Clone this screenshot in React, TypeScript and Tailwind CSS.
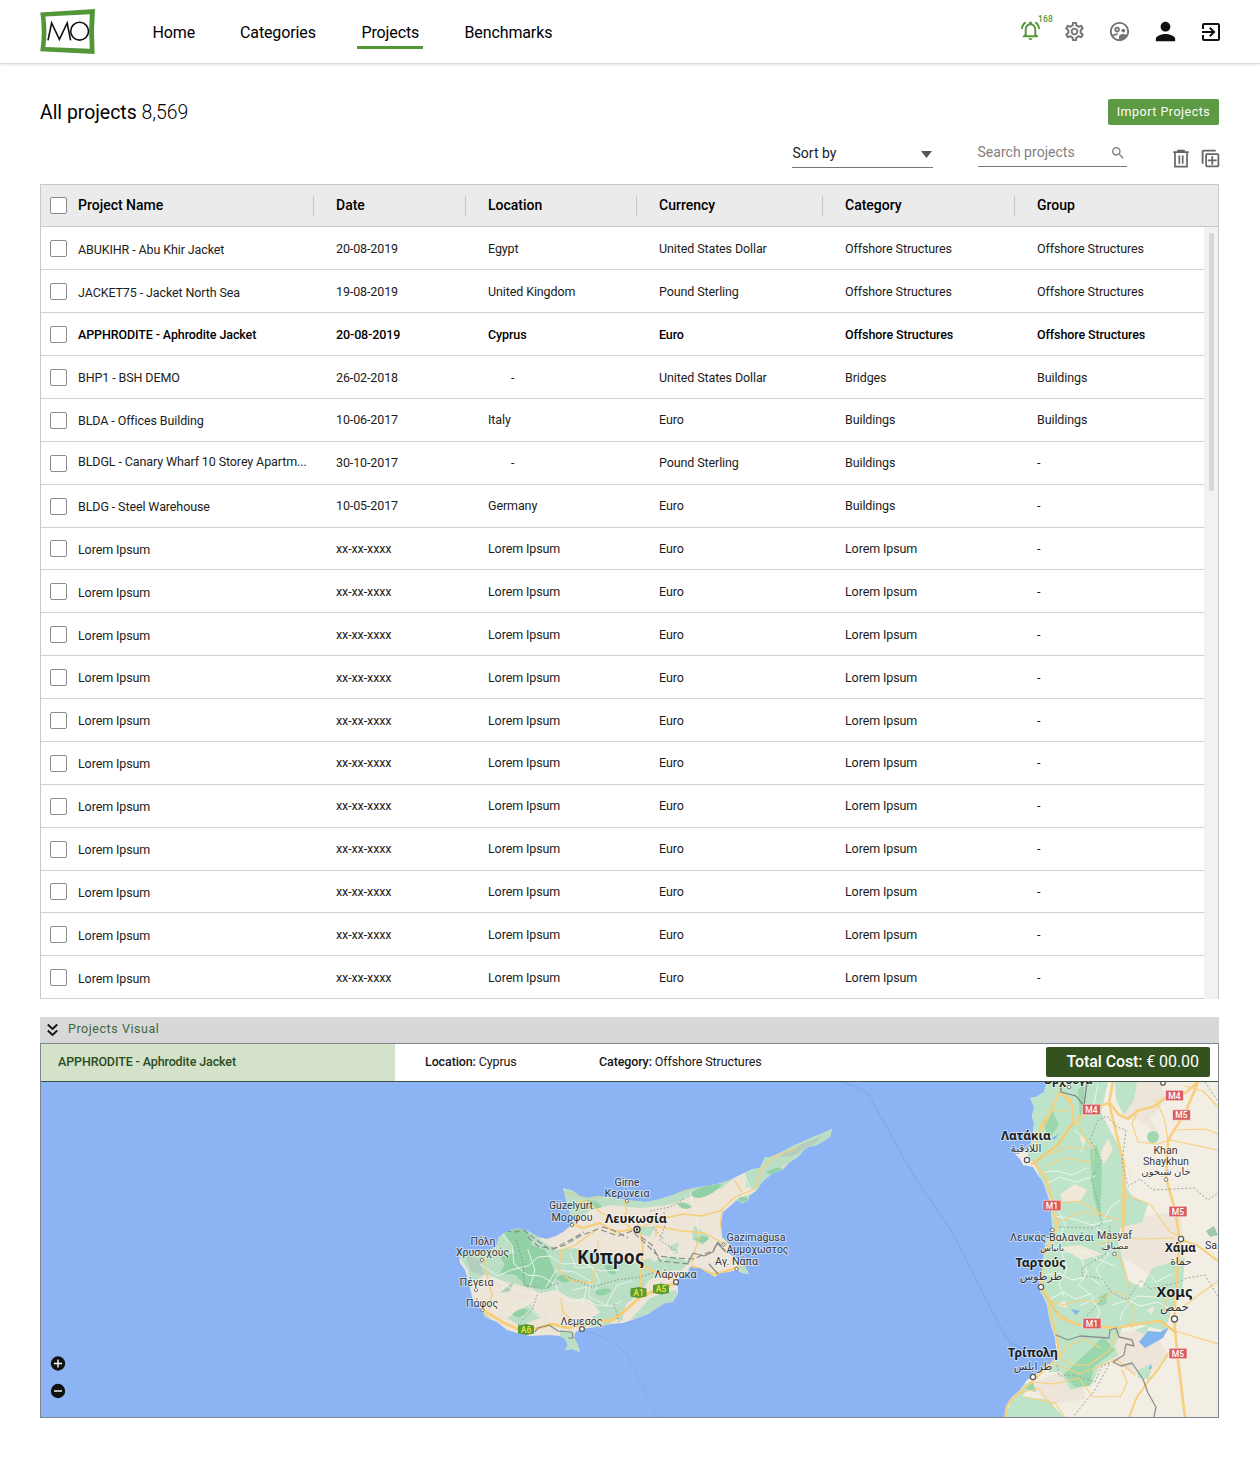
import React from "react";
import {
  MdOutlineSettings,
  MdOutlineSupervisedUserCircle,
  MdPerson,
  MdExitToApp,
  MdSearch,
  MdOutlineAddToPhotos,
  MdOutlineNotificationsActive,
} from "react-icons/md";

type Row = [string, string, string, string, string, string];

const named: Row[] = [
  ["ABUKIHR - Abu Khir Jacket", "20-08-2019", "Egypt", "United States Dollar", "Offshore Structures", "Offshore Structures"],
  ["JACKET75 - Jacket North Sea", "19-08-2019", "United Kingdom", "Pound Sterling", "Offshore Structures", "Offshore Structures"],
  ["APPHRODITE - Aphrodite Jacket", "20-08-2019", "Cyprus", "Euro", "Offshore Structures", "Offshore Structures"],
  ["BHP1 - BSH DEMO", "26-02-2018", "-", "United States Dollar", "Bridges", "Buildings"],
  ["BLDA - Offices Building", "10-06-2017", "Italy", "Euro", "Buildings", "Buildings"],
  ["BLDGL - Canary Wharf 10 Storey Apartm...", "30-10-2017", "-", "Pound Sterling", "Buildings", "-"],
  ["BLDG - Steel Warehouse", "10-05-2017", "Germany", "Euro", "Buildings", "-"],
];
const rows: Row[] = [
  ...named,
  ...Array.from({ length: 11 }, (): Row => ["Lorem Ipsum", "xx-xx-xxxx", "Lorem Ipsum", "Euro", "Lorem Ipsum", "-"]),
];

const columns = ["Date", "Location", "Currency", "Category", "Group"];
const grid = "grid grid-cols-[37px_258px_152px_171px_186px_192px_1fr] items-center";

function Logo() {
  return (
    <svg className="h-[46px] w-[56px]" viewBox="0 0 56 46">
      <path d="M0.3 3.6 L55 0 Q53.2 22 54.6 45 L0.3 42.2 Q3.2 23 0.3 3.6Z" fill="#529637" />
      <path d="M5.4 7.6 L49.8 5.2 Q48.4 22 49.8 39.7 L5.4 38 Q7.4 23 5.4 7.6Z" fill="#fff" />
      <path d="M8 31.3 L11.6 14 L19.4 30.4 L27.2 14 L30.6 31.3" fill="none" stroke="#111" strokeWidth="1.6" strokeLinejoin="miter" />
      <circle cx="39.6" cy="22.2" r="8.9" fill="none" stroke="#111" strokeWidth="1.6" />
    </svg>
  );
}

function Checkbox() {
  return <span className="mt-px ml-[9.4px] block size-[17px] rounded-[2px] border border-[#8b8b8b] bg-white" />;
}

function TopBar() {
  const item = "text-[16px] leading-6 tracking-[-0.12px]";
  return (
    <header className="flex h-16 items-center border-b border-[#dcdcdc] pr-[37px] pl-10 shadow-[0_1px_2px_#e6e6e6]">
      <Logo />
      <nav className="flex flex-1 items-center pt-[2px] text-black">
        <a className={item + " ml-[56.5px] w-[87.5px]"}>Home</a>
        <a className={item + " w-[117px]"}>Categories</a>
        <a className={item + " relative mr-[41.5px] w-[66px] pl-[4.5px]"}>
          Projects
          <span className="absolute -bottom-[4px] left-0 h-[2.5px] w-full bg-[#529637]" />
        </a>
        <a className={item}>Benchmarks</a>
      </nav>
      <div className="flex items-center text-[#737373]">
        <span className="relative mr-[21px] text-[#529637]">
          <MdOutlineNotificationsActive size={23} className="-mt-[2px]" />
          <span className="absolute -top-[8px] left-[19px] text-[8.5px] leading-3 font-medium tracking-[0.2px]">168</span>
        </span>
        <MdOutlineSettings size={23} className="mr-[22px]" />
        <MdOutlineSupervisedUserCircle size={23} className="mr-[20px]" />
        <MdPerson size={29} className="mr-[19px] text-[#111]" />
        <MdExitToApp size={24} className="text-[#111]" />
      </div>
    </header>
  );
}

function TrashIcon() {
  return (
    <svg className="h-[20px] w-[16px]" viewBox="0 0 16 20" fill="none" stroke="#666" strokeWidth="1.7">
      <path d="M0.3 3.2H15.7 M5 2.6V1.5H11V2.6 M2 3.4V17.6H14V3.4 M6.3 6.5V14.7 M9.7 6.5V14.7" />
    </svg>
  );
}

function Toolbar() {
  return (
    <div className="flex h-[52px] items-start justify-end pt-[6px]">
      <div className="mr-[45px] flex h-[30px] w-[141px] items-center justify-between border-b border-[#777] pl-[1px] text-[14px] text-[#222]">
        <span className="pt-[2px]">Sort by</span>
        <svg className="mt-[4px] mr-[1px] h-[7px] w-[11px]" viewBox="0 0 11 7">
          <path d="M0 0H11L5.5 7Z" fill="#555" />
        </svg>
      </div>
      <div className="mr-[46px] flex h-[29px] w-[149px] items-center justify-between border-b border-[#777] text-[14px] tracking-[0.02px] text-[#808080]">
        <span className="pt-px">Search projects</span>
        <MdSearch size={16} className="mt-px mr-[1px]" />
      </div>
      <div className="flex items-center gap-[11px] pt-[10px]">
        <TrashIcon />
        <MdOutlineAddToPhotos size={21} className="-mr-[1.5px] -scale-y-100 text-[#666]" />
      </div>
    </div>
  );
}

function Table() {
  return (
    <section className="border border-b-0 border-[#c9c9c9]">
      <div className={grid + " h-[42.4px] border-b border-[#c9c9c9] bg-[#ebebeb] pb-px text-[14px] font-medium text-black"}>
        <Checkbox />
        <span>Project Name</span>
        {columns.map((c) => (
          <span key={c} className="relative">
            <span className="absolute top-px -left-[23px] h-5 w-px bg-[#c6c6c6]" />
            {c}
          </span>
        ))}
      </div>
      <div className="flex">
        <div className="flex-1">
          {rows.map((r, i) => (
            <div
              key={i}
              className={grid + " h-[42.88px] border-b border-[#d0d0d0] text-[12.5px] tracking-[-0.11px] " + (i === 2 ? "font-medium text-black" : "text-[#1c1c1c]")}
            >
              <Checkbox />
              <span className={i === 5 ? "mt-0 whitespace-nowrap" : "mt-[3.4px] whitespace-nowrap"}>{r[0]}</span>
              {r.slice(1).map((v, j) => (
                <span key={j} className={v === "-" && j === 1 ? "mt-[2px] pl-[23px] whitespace-nowrap" : "mt-[2px] whitespace-nowrap"}>{v}</span>
              ))}
            </div>
          ))}
        </div>
        <div className="w-[14px] bg-[#f2f2f2] pt-[6px] pl-[5px]">
          <div className="h-[258px] w-[5px] rounded-[1px] bg-[#d7d7d7]" />
        </div>
      </div>
    </section>
  );
}

type Label = { x: number; y: number; t: string; s?: number; b?: boolean; a?: "start" | "middle"; w?: number };

const labels: Label[] = [
  { x: 627, y: 1186, t: "Girne", w: 25 },
  { x: 627, y: 1196.5, t: "Κερύνεια", w: 45 },
  { x: 571, y: 1209, t: "Güzelyurt", w: 44 },
  { x: 572, y: 1220.5, t: "Μόρφου", w: 41 },
  { x: 636, y: 1223, t: "Λευκωσία", s: 12, b: true, w: 62 },
  { x: 610.5, y: 1263.5, t: "Κύπρος", s: 19, b: true, w: 67 },
  { x: 483, y: 1244.5, t: "Πόλη", w: 25 },
  { x: 482.5, y: 1256, t: "Χρυσοχούς", w: 53 },
  { x: 476.5, y: 1285.5, t: "Πέγεια", w: 34 },
  { x: 482, y: 1306.5, t: "Πάφος", w: 32 },
  { x: 581.5, y: 1324.5, t: "Λεμεσός", w: 42 },
  { x: 675.5, y: 1277.5, t: "Λάρνακα", w: 42 },
  { x: 756, y: 1241, t: "Gazimağusa", w: 59 },
  { x: 757.5, y: 1252.5, t: "Αμμόχωστος", w: 62 },
  { x: 736.5, y: 1265, t: "Αγ. Νάπα", w: 43 },
  { x: 1026, y: 1139.5, t: "Λατάκια", s: 12.3, b: true, w: 50 },
  { x: 1026, y: 1152, t: "اللاذقية", s: 10.5 },
  { x: 1165.5, y: 1154, t: "Khan", w: 24 },
  { x: 1166, y: 1164.5, t: "Shaykhun", w: 46 },
  { x: 1166, y: 1175, t: "خان شيخون", s: 10 },
  { x: 1052, y: 1241, t: "Λευκάς-Βαλανέαι", w: 84 },
  { x: 1052, y: 1251, t: "بانياس", s: 9 },
  { x: 1114.5, y: 1239, t: "Masyaf", w: 35 },
  { x: 1115, y: 1249, t: "مصياف", s: 9 },
  { x: 1040.5, y: 1266.5, t: "Ταρτούς", s: 12.3, b: true, w: 50 },
  { x: 1041, y: 1280, t: "طرطوس", s: 11 },
  { x: 1180.5, y: 1252, t: "Χάμα", s: 12.3, b: true, w: 31 },
  { x: 1181, y: 1265, t: "حماة", s: 10.5 },
  { x: 1205, y: 1249, t: "Sa", a: "start", w: 12 },
  { x: 1174.5, y: 1296.5, t: "Χομς", s: 14.2, b: true, w: 36 },
  { x: 1174.5, y: 1311, t: "حمص", s: 12 },
  { x: 1033, y: 1357, t: "Τρίπολη", s: 12.5, b: true, w: 50 },
  { x: 1033, y: 1370, t: "طرابلس", s: 11 },
  { x: 1068, y: 1084, t: "Ορχουγα", s: 11, b: true },
];

const redShields: [number, number, string][] = [
  [1174.5, 1095.5, "M4"], [1091.5, 1109.5, "M4"], [1181.5, 1115, "M5"], [1052, 1205.5, "M1"],
  [1178, 1211.5, "M5"], [1092, 1323.5, "M1"], [1178, 1353.5, "M5"],
];
const greenShields: [number, number, string][] = [[638.5, 1292.5, "A1"], [661, 1289, "A5"], [526, 1329.5, "A6"]];
const towns: [number, number, number][] = [
  [627, 1201, 1.6], [572, 1225, 1.6], [482, 1260, 1.6], [476, 1290, 1.6], [482.5, 1310, 1.6], [582, 1329, 2.4],
  [676, 1282, 2.4], [723.5, 1244.5, 1.6], [736.5, 1269, 1.6], [1027, 1160, 2.6], [1166, 1179.5, 1.8], [1052.5, 1230, 1.8],
  [1114.5, 1254, 1.8], [1041, 1287, 2.6], [1181, 1239, 2.6], [1174.5, 1319, 3], [1033, 1377, 2.6], [1069, 1087, 1.8], [1163, 1083, 2.2],
];

const ISLAND =
  "M459 1255 L471 1253 L490 1250 L496 1247 L499 1237 L504 1233 L512 1230 L518 1228 L528 1231 L538 1237 L547 1239 L556 1236 L563 1232 L569 1227 L573 1222 L570 1214 L568 1207 L565 1196 L563 1188 L573 1191 L580 1196 L587 1198 L597 1196 L607 1197 L627 1200 L645 1202 L657 1200 L673 1195 L685 1190 L700 1187 L717 1184 L730 1180 L742 1174 L753 1169 L760 1168 L765 1157 L770 1157 L780 1153 L795 1145 L804 1141 L813 1137 L823 1133 L832 1129 L830 1137 L817 1145 L808 1147 L803 1151 L798 1157 L790 1162 L782 1170 L773 1173 L762 1182 L757 1190 L749 1196 L748 1201 L742 1203 L737 1200 L729 1207 L723 1212 L721 1223 L722 1237 L730 1245 L728 1253 L736 1258 L743 1263 L749 1274 L742 1273 L737 1270 L728 1272 L720 1273 L715 1277 L710 1274 L700 1268 L690 1267 L688 1272 L680 1278 L673 1282 L678 1287 L678 1293 L673 1302 L665 1303 L657 1308 L648 1314 L640 1317 L632 1320 L623 1323 L610 1324 L597 1327 L580 1329 L575 1333 L574 1338 L577 1343 L580 1352 L572 1349 L565 1350 L568 1345 L565 1339 L560 1336 L550 1335 L530 1336 L517 1333 L507 1330 L497 1322 L485 1317 L482 1310 L475 1303 L472 1297 L470 1288 L468 1280 L465 1270 L460 1263Z";

const COAST =
  "M1047 1082 L1044 1092 L1036 1097 L1030 1098 L1034 1107 L1032 1116 L1034 1124 L1032 1138 L1030 1146 L1024 1151 L1015 1154 L1020 1159 L1023 1165 L1033 1167 L1038 1175 L1043 1182 L1046 1191 L1050 1202 L1052 1222 L1053 1230 L1046 1240 L1043 1258 L1042 1272 L1038 1287 L1043 1296 L1047 1305 L1050 1322 L1055 1338 L1057 1355 L1051 1363 L1042 1368 L1035 1376 L1027 1380 L1020 1390 L1011 1398 L1006 1406 L1004 1418 L1219 1418 L1219 1082Z";

function MapView() {
  return (
    <svg className="block h-[335px] w-full" viewBox="41 1082 1177 335" preserveAspectRatio="none" fontFamily='Roboto, "Noto Sans", "DejaVu Sans", sans-serif'>
      <defs>
        <clipPath id="island"><path d={ISLAND} /></clipPath>
        <clipPath id="coast"><path d={COAST} /></clipPath>
      </defs>
      <rect x="41" y="1082" width="1177" height="335" fill="#8cb4f5" />
      <g fill="none" stroke="#719bdf" strokeWidth="0.8" opacity="0.8">
        <path d="M842 1082 Q862 1088 868 1094 L914 1176 L952 1232 L990 1307 L1008 1341 L1028 1352" />
        <path d="M582 1331 Q610 1335 628 1356 L657 1417" strokeDasharray="3 2" />
      </g>

      <path d={ISLAND} fill="#ede6d8" />
      <g clipPath="url(#island)" strokeLinejoin="round" strokeLinecap="round">
        <g fill="#bbdfc5">
          <path d="M455 1250 L490 1245 L505 1228 L530 1230 L542 1241 L556 1250 L575 1248 L605 1254 L632 1264 L650 1258 L664 1273 L648 1281 L641 1293 L626 1304 L622 1321 L604 1317 L590 1300 L570 1298 L556 1290 L541 1293 L525 1287 L500 1280 L485 1274 L470 1285 L468 1270Z" />
          <path d="M560 1185 L590 1195 L640 1198 L700 1183 L735 1177 L722 1188 L690 1197 L668 1205 L640 1208 L610 1205 L590 1210 L570 1228Z" />
          <path d="M745 1172 L765 1155 L835 1126 L830 1142 L800 1155 L770 1176 L758 1190 L746 1187Z" />
          <path d="M735 1200 L750 1194 L748 1206 L735 1204Z M738 1262 L750 1262 L752 1278 L738 1270Z M630 1320 L650 1298 L675 1290 L682 1297 L660 1310Z M560 1330 L580 1334 L585 1355 L560 1353Z" />
          <path d="M640 1226 L655 1227 L650 1237 L640 1234Z M694 1225 L709 1237 L703 1245 L692 1239Z M668 1247 L679 1242 L676 1255Z M650 1262 L672 1256 L690 1262 L682 1270 L655 1272Z" />
          <path d="M500 1293 L514 1282 L509 1292Z M507 1318 L530 1304 L540 1318 L520 1326Z M584 1326 L600 1312 L620 1318 L600 1328Z M474 1302 L490 1318 L505 1330 L478 1315Z" />
        </g>
        <g fill="#92d0a6">
          <path d="M504 1232 L517 1227 L528 1232 L532 1245 L545 1250 L550 1260 L556 1275 L549 1289 L526 1287 L516 1275 L500 1273 L505 1264 L500 1257 L515 1253Z" />
          <path d="M580 1202 Q595 1196 602 1207 Q590 1212 580 1202Z M692 1192 Q708 1182 722 1184 Q715 1194 700 1198 Q690 1198 692 1192Z M677 1204 Q684 1200 692 1207 Q684 1212 677 1204Z M766 1172 Q778 1165 785 1170 L772 1176Z M738 1198 Q748 1194 748 1201 L740 1202Z" />
          <path d="M512 1314 Q522 1306 528 1310 Q520 1322 512 1314Z M556 1278 Q564 1271 572 1279 Q565 1287 556 1278Z M593 1292 Q604 1286 612 1290 Q602 1300 593 1292Z M694 1239 Q706 1233 709 1239 Q702 1246 694 1239Z M604 1266 Q614 1262 616 1274 Q608 1276 604 1266Z" />
        </g>
        <path d="M778 1156 L802 1144 L822 1136 L812 1146 L790 1157Z M465 1254 L481 1260 L484 1275 L471 1272Z M501 1292 L514 1281 L510 1291Z" fill="#b5cdbd" />
        <g fill="none" stroke="#e5f2e9" strokeWidth="1">
          <path d="M503 1235 L512 1245 L514 1264 L527 1275 L541 1276 L555 1284 L560 1296 L571 1302 L584 1298 L596 1305 L611 1306 L622 1301 M480 1264 L498 1276 L511 1270 L528 1266 L538 1257 L550 1256 L562 1264 L583 1263 L601 1271 L619 1270 M528 1250 L535 1270 L530 1286 L539 1299 M545 1289 L556 1270 L575 1272 L590 1281 L589 1297 L606 1305 L617 1285 L632 1281" />
          <path d="M570 1253 L576 1268 L592 1267 L599 1280 L594 1293 M589 1312 L583 1303 L587 1287 L573 1290 M507 1314 L517 1303 L527 1304 L538 1317 M690 1192 L695 1210 L699 1235 M744 1174 L750 1188 L742 1197 M492 1276 L510 1288 L530 1293 M550 1311 L552 1326 M664 1260 L670 1252 L690 1251" />
        </g>
        <g fill="none" stroke="#f7cd77" strokeWidth="1.3">
          <path d="M484 1260 L488 1280 L492 1295 L489 1309 M636 1229 L664 1218 L684 1214 L701 1216 L720 1211 L735 1197 L755 1189 L761 1170 L775 1156 L797 1148 M655 1226 L682 1231 L704 1233 L725 1244" />
          <path d="M483 1310 L504 1323 L520 1330 L532 1330 L552 1324 L569 1328 L590 1322 L613 1320 L627 1309 L640 1297 L661 1288 L676 1283" strokeWidth="3" />
          <path d="M573 1224 L583 1228 L600 1223 L615 1232 L635 1229 L641 1235 L643 1248 L641 1270 L640 1296 M640 1265 L655 1272 L676 1280" strokeWidth="2" />
          <path d="M735 1181 L742 1192 M722 1210 L720 1224 L727 1244 M692 1267 L714 1274 L738 1267 M624 1201 L627 1212 L620 1220 L631 1228 M574 1203 L586 1201 L603 1214 L612 1217 M596 1230 L574 1246 L561 1250 L559 1270 L570 1280 L592 1283 L596 1265 L598 1242 M561 1298 L563 1312 L578 1326 M656 1228 L656 1236 M699 1236 L692 1262" />
          <path d="M692 1266 L717 1275 L738 1267" strokeWidth="2.2" />
          <path d="M563 1192 L587 1198 L607 1196 L640 1201 L670 1195 L700 1186 L730 1180" stroke="#d3c98c" strokeWidth="0.9" />
        </g>
        <g fill="none" stroke="#858a86" strokeWidth="0.9" strokeLinecap="butt">
          <path d="M505 1231 L515 1232 L524 1230 L535 1239 L550 1250 L565 1245 L580 1236 L598 1229 L618 1236 L632 1231 L646 1244 L658 1256 L675 1258 L694 1259 L704 1254 L713 1251 L718 1242 L726 1252" strokeDasharray="6 3" strokeWidth="1.1" />
          <path d="M528 1237 L539 1247 L555 1248 L572 1239 L584 1232 M602 1227 L613 1230 L628 1238 M641 1237 L652 1245 L660 1261 L690 1264" strokeDasharray="6 3" strokeWidth="1.1" />
          <path d="M516 1240 L523 1262 L524 1285 L543 1289 L558 1283 M518 1325 L532 1310 L538 1293 M568 1277 L592 1287 L617 1280 L640 1277 L655 1272 M614 1304 L619 1322 M650 1211 L670 1207 L684 1199 M664 1212 L665 1225 L660 1240 L679 1253 M653 1227 L664 1240" strokeDasharray="1.5 2" />
          <path d="M535 1332 L538 1328 L549 1325 L558 1331 L572 1332 L573 1338 L568 1338 M688 1263 L693 1253 L704 1256 L713 1252 L717 1243 L725 1251 M709 1264 L718 1274" strokeWidth="1.2" />
        </g>
      </g>

      <path d={COAST} fill="#f2eee3" />
      <g clipPath="url(#coast)" strokeLinejoin="round" strokeLinecap="round">
        <path d="M1125 1082 L1160 1082 L1166 1100 L1150 1118 L1160 1135 L1138 1120 L1125 1118Z M1128 1220 L1180 1210 L1185 1260 L1150 1275 L1115 1252Z M1116 1332 L1150 1330 L1170 1355 L1145 1378 L1110 1362Z M1030 1384 L1078 1364 L1086 1399 L1048 1405Z" fill="#ede5d9" />
        <g fill="#bde3c9">
          <path d="M1040 1082 L1108 1082 L1101 1112 L1110 1130 L1121 1150 L1125 1185 L1132 1196 L1148 1204 L1142 1222 L1120 1228 L1118 1242 L1124 1264 L1127 1280 L1142 1288 L1152 1268 L1185 1258 L1182 1292 L1171 1311 L1165 1331 L1142 1325 L1122 1328 L1115 1345 L1118 1355 L1100 1366 L1092 1384 L1070 1390 L1061 1372 L1048 1372 L1060 1350 L1038 1290 L1042 1235 L1050 1200 L1036 1168 L1025 1150 L1032 1120 L1025 1098Z" />
          <path d="M1115 1082 L1137 1082 L1134 1100 L1124 1115 L1116 1100Z M1134 1330 L1150 1325 L1145 1334Z M1137 1370 L1152 1364 L1149 1379 L1138 1378Z M1004 1417 L1015 1395 L1048 1400 L1064 1417Z M1004 1405 L1022 1385 L1032 1382 L1017 1404Z" />
          <circle cx="1153" cy="1137" r="6" fill="#a1d8b0" />
          <path d="M1206 1231 L1214 1226 L1218 1235 L1210 1237Z" fill="#9fc7b0" />
        </g>
        <g fill="#9bd7ad">
          <path d="M1097 1145 L1102 1170 L1100 1220 L1093 1195 L1090 1150Z M1043 1122 L1052 1110 L1059 1125 L1049 1139Z M1078 1090 L1084 1084 L1084 1109 L1080 1116Z M1064 1374 L1090 1350 L1103 1337 L1115 1350 L1094 1367 L1090 1386 L1074 1387Z M1099 1297 L1107 1293 L1106 1304 L1099 1306Z M1025 1389 L1033 1382 L1036 1392Z" />
        </g>
        <path d="M1113 1150 L1103 1165 L1101 1152 L1108 1138Z M1060 1194 L1075 1184 L1087 1190 L1080 1202 L1063 1201Z M1079 1136 L1086 1139 L1083 1145Z M1126 1163 L1133 1170 L1130 1180Z M1057 1305 L1065 1300 L1067 1308Z M1147 1310 L1154 1306 L1152 1315Z M1060 1247 L1080 1245 L1102 1254 L1082 1260Z" fill="#f0e9d8" />
        <path d="M1139 1342 L1148 1331 L1160 1332 L1169 1327 L1163 1338 L1145 1348Z M1071 1309 L1080 1311 L1076 1315Z M1052 1138 L1059 1134 L1054 1140Z M1149 1370 L1150 1364 L1152 1368Z" fill="#84b4ef" />
        <g fill="none" stroke="#ecf6ee" strokeWidth="1">
          <path d="M1044 1172 L1058 1171 L1072 1175 L1087 1168 M1048 1183 L1060 1177 L1075 1182 L1095 1176 M1054 1216 L1074 1219 L1092 1225 L1112 1220 M1050 1245 L1064 1252 L1084 1251 L1100 1260 L1115 1266 M1046 1275 L1059 1273 L1072 1280 L1088 1276 L1101 1285 M1062 1253 L1067 1268 L1059 1284 L1064 1296 M1081 1257 L1087 1272 L1079 1285 L1094 1298 M1050 1299 L1064 1292 L1075 1299 L1091 1294 M1093 1225 L1105 1234 L1108 1255 L1096 1269 L1104 1284" />
          <path d="M1112 1305 L1128 1300 L1140 1306 L1158 1302 L1168 1308 M1120 1320 L1124 1309 L1137 1296 L1158 1297 M1149 1273 L1156 1282 L1172 1274 M1081 1305 L1093 1300 L1100 1312 L1096 1320 M1058 1210 L1065 1224 L1061 1235 M1074 1130 L1085 1139 L1081 1152 M1098 1084 L1094 1104 L1097 1113 M1104 1218 L1112 1206 L1120 1200" />
        </g>
        <g fill="none" stroke="#f8cf7c" strokeWidth="1.2">
          <path d="M1059 1094 L1070 1098 L1072 1110 L1052 1111 L1041 1124 L1036 1145 M1078 1122 L1082 1135 L1094 1149 L1093 1160 M1050 1154 L1068 1147 L1088 1149 M1047 1166 L1063 1158 L1092 1162 M1050 1204 L1080 1201 L1105 1216 L1119 1220 M1054 1224 L1083 1212 L1110 1217 M1137 1112 L1132 1124 L1138 1142 L1157 1144 L1170 1140 L1218 1150 M1156 1100 L1164 1118 L1168 1140 M1185 1086 L1203 1091 L1218 1107 M1178 1130 L1205 1129 L1218 1134 M1124 1160 L1126 1198 L1122 1234 M1125 1195 L1150 1204 L1170 1232 L1183 1238 M1117 1253 L1126 1273 L1130 1290 M1098 1245 L1120 1237 L1140 1239 L1175 1238" />
          <path d="M1050 1301 L1063 1305 L1081 1300 L1098 1302 L1112 1291 L1124 1294 L1134 1310 L1132 1328 M1171 1290 L1163 1308 L1176 1325 M1184 1306 L1218 1281 M1175 1331 L1218 1344 M1056 1354 L1072 1365 L1089 1365 L1110 1350 L1116 1331 M1060 1355 L1071 1344 L1086 1339 L1100 1348 M1057 1365 L1080 1374 L1100 1366 L1116 1359 L1135 1375 M1018 1394 L1038 1388 L1053 1407 M1032 1382 L1054 1384 L1079 1378 L1093 1397 L1121 1396 L1127 1382 L1122 1370 M1025 1397 L1055 1403 L1065 1417" />
          <path d="M1129 1417 L1137 1397 L1150 1379 L1159 1368 L1168 1354 L1176 1348" strokeWidth="2" />
          <path d="M1032 1164 L1046 1154 L1058 1145 L1069 1128 L1080 1117 L1095 1107 L1110 1103 L1118 1114 L1128 1119 L1137 1111 L1155 1106 L1170 1094 L1185 1093 L1198 1082 M1035 1164 L1046 1178 L1052 1201 L1057 1224 L1053 1240 L1042 1257 L1041 1286 L1052 1304 L1059 1317 L1079 1325 L1116 1328 L1137 1324 L1160 1321 L1174 1331 M1197 1085 L1184 1115 L1168 1140 L1166 1178 L1175 1210 L1180 1240 L1177 1278 L1174 1320 L1178 1360 L1185 1417 M1113 1082 L1109 1103 L1118 1140 L1124 1165 L1123 1232" strokeWidth="2.6" />
          <path d="M1063 1083 L1058 1095 L1047 1120 L1035 1138 M1063 1094 L1072 1105 L1073 1120 M1048 1304 L1057 1338 L1059 1355 L1051 1364 L1037 1377 L1022 1390 L1008 1404 L1005 1417 M1181 1240 L1197 1245 L1219 1262" strokeWidth="2.2" />
          <path d="M1034 1163 L1048 1152 L1060 1142 L1073 1123 M1042 1290 L1054 1309 L1068 1321 M1162 1321 L1176 1333" stroke="#eebb61" strokeWidth="0.8" />
        </g>
        <g fill="none" stroke="#9ba19c" strokeWidth="1" strokeDasharray="2 2" strokeLinecap="butt">
          <path d="M1090 1140 L1098 1120 L1107 1116 L1117 1127 L1126 1130 L1122 1163 L1128 1186 L1140 1179 L1153 1190 L1194 1188 L1208 1200 L1219 1192 M1091 1142 L1102 1162 L1091 1178 L1099 1206 L1102 1225 L1092 1228 L1058 1227 M1205 1082 L1219 1103 M1110 1226 L1107 1253 L1082 1268 L1082 1276 L1101 1278 L1112 1293 L1127 1300 L1141 1280 L1150 1289 L1176 1283 L1187 1278 L1205 1275 L1219 1298 M1107 1294 L1098 1304 L1086 1317 M1057 1365 L1059 1376 L1074 1375 L1095 1382 L1102 1366 L1110 1363 L1095 1390 L1073 1417" />
        </g>
        <path d="M1056 1335 L1068 1340 L1080 1336 L1109 1338 L1110 1330 L1116 1328 L1119 1337 L1132 1340 L1134 1346 L1126 1344 L1124 1355 L1113 1362 L1121 1366 L1132 1363 L1143 1379 L1148 1393 L1156 1407 L1154 1417" fill="none" stroke="#8d918d" strokeWidth="1.3" />
        <path d="M1061 1082 L1061 1092 L1076 1096 L1084 1106 L1087 1082" fill="none" stroke="#777b78" strokeWidth="1.2" />
      </g>

      {towns.map(([x, y, r], i) => (
        <circle key={i} cx={x} cy={y} r={r} fill="#fff" stroke="#5b5b5b" strokeWidth={r > 2 ? 1.3 : 0.8} />
      ))}
      <circle cx="637" cy="1229.5" r="3" fill="#fff" stroke="#333" strokeWidth="1.3" />
      <circle cx="637" cy="1229.5" r="1.3" fill="#333" />
      {redShields.map(([x, y, t], i) => (
        <g key={i}>
          <rect x={x - 9} y={y - 5.2} width="18" height="10.4" rx="1" fill="#db5b60" stroke="#fff" strokeWidth="0.5" />
          <text x={x} y={y + 3} fontSize="8.5" fontWeight="500" fill="#fff" textAnchor="middle">{t}</text>
        </g>
      ))}
      {greenShields.map(([x, y, t], i) => (
        <g key={i}>
          <path d={`M${x - 8} ${y - 4} L${x} ${y - 5.5} L${x + 8} ${y - 4} V${y + 4} L${x} ${y + 5.5} L${x - 8} ${y + 4}Z`} fill="#579b35" />
          <text x={x} y={y + 3} fontSize="8.5" fontWeight="500" fill="#f2e739" textAnchor="middle">{t}</text>
        </g>
      ))}
      {labels.map((l, i) => (
        <text
          key={i}
          x={l.x}
          y={l.y}
          fontSize={l.s ?? 10.4}
          fontFamily={l.b ? '"Noto Sans", "DejaVu Sans", sans-serif' : undefined}
          fontWeight={l.b ? 700 : 400}
          textAnchor={l.a ?? "middle"}
          textLength={l.w}
          lengthAdjust="spacingAndGlyphs"
          fill={l.b ? "#1d1d1d" : "#35373b"}
          stroke="#fff"
          strokeOpacity="0.5"
          strokeWidth="2"
          paintOrder="stroke"
          strokeLinejoin="round"
        >
          {l.t}
        </text>
      ))}
      {[1363.5, 1391].map((y, i) => (
        <g key={y}>
          <circle cx="58" cy={y} r="7.2" fill="#111" />
          <path d={`M54 ${y}H62` + (i === 0 ? ` M58 ${y - 4}V${y + 4}` : "")} stroke="#fff" strokeWidth="1.4" />
        </g>
      ))}
    </svg>
  );
}

function ProjectsVisual() {
  return (
    <section className="mt-[17.6px]">
      <div className="flex h-[26px] items-center bg-[#d8d8d8] pl-[7px] text-[12.5px] tracking-[0.55px] text-[#41663a]">
        <svg className="mr-[10px] h-[14px] w-[11px]" viewBox="0 0 11 14" fill="none" stroke="#111" strokeWidth="1.8">
          <path d="M0.8 1.5L5.5 6L10.2 1.5 M0.8 7.5L5.5 12L10.2 7.5" />
        </svg>
        Projects Visual
      </div>
      <div className="border border-[#7d8490]">
        <div className="flex h-[38px] items-center border-b border-[#3c5140] text-[12.5px] tracking-[-0.12px] text-[#171717]">
          <div className="flex h-full w-[354px] items-center bg-[#d3e2c8] pt-px pl-[17px] font-medium text-[#2c4c1f]">APPHRODITE - Aphrodite Jacket</div>
          <div className="w-[173px] pt-px pl-[30px] whitespace-nowrap"><span className="font-medium">Location:</span> Cyprus</div>
          <div className="flex-1 pt-px pl-[31px]"><span className="font-medium">Category:</span> Offshore Structures</div>
          <div className="mr-2 flex h-[30px] w-[164px] items-center rounded-[2px] bg-[#33521f] pl-[20.5px] text-[16px] tracking-[-0.1px] whitespace-pre text-white">
            <span className="font-medium">Total Cost:</span> € 00.00
          </div>
        </div>
        <MapView />
      </div>
    </section>
  );
}

export default function App() {
  return (
    <div className="h-[1461px] w-[1260px] overflow-hidden bg-white font-[Roboto,sans-serif] text-black">
      <TopBar />
      <main className="pr-[41px] pl-10">
        <div className="flex h-[68px] items-end justify-between pb-[7px]">
          <h1 className="h-[25px] text-[19.4px] leading-[26px]">
            All projects <span className="font-light">8,569</span>
          </h1>
          <button className="h-[26px] w-[111px] rounded-[2px] bg-[#5c9a43] text-[12.5px] leading-[26px] tracking-[0.5px] whitespace-nowrap text-white">Import Projects</button>
        </div>
        <Toolbar />
        <Table />
        <ProjectsVisual />
      </main>
    </div>
  );
}
